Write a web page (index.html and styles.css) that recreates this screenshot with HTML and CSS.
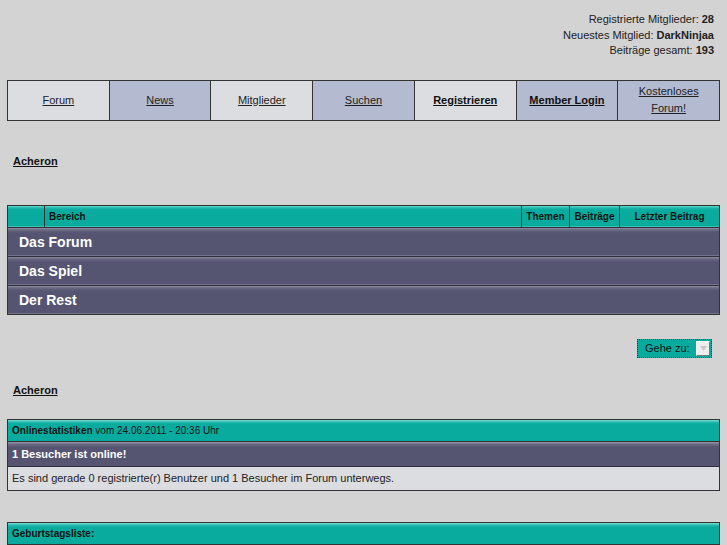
FILE: index.html
```html
<!DOCTYPE html>
<html lang="de">
<head>
  <meta charset="UTF-8" />
  <title>Acheron</title>
  <link rel="stylesheet" href="styles.css">
</head>
<body>
  <div class="page">
    <div class="board-stats">
      <div>Registrierte Mitglieder: <b>28</b></div>
      <div>Neuestes Mitglied: <b>DarkNinjaa</b></div>
      <div>Beiträge gesamt: <b>193</b></div>
    </div>

    <nav class="menu">
      <a class="menu-item light" href="#">Forum</a>
      <a class="menu-item blue" href="#">News</a>
      <a class="menu-item light" href="#">Mitglieder</a>
      <a class="menu-item blue" href="#">Suchen</a>
      <a class="menu-item light strong" href="#">Registrieren</a>
      <a class="menu-item blue strong" href="#">Member Login</a>
      <a class="menu-item blue" href="#">Kostenloses<br>Forum!</a>
    </nav>

    <div class="crumb crumb-top"><a href="#">Acheron</a></div>

    <table class="forums">
      <tr class="head">
        <th class="icon-col"></th>
        <th class="left">Bereich</th>
        <th class="topics">Themen</th>
        <th class="posts">Beiträge</th>
        <th class="last">Letzter Beitrag</th>
      </tr>
      <tr class="cat"><td colspan="5">Das Forum</td></tr>
      <tr class="cat"><td colspan="5">Das Spiel</td></tr>
      <tr class="cat"><td colspan="5">Der Rest</td></tr>
    </table>

    <div class="jump">
      <div class="jump-select">
        <span>Gehe zu:</span>
        <span class="jump-btn"><svg width="7" height="5" viewBox="0 0 7 5"><path d="M0 0h7L3.5 5z" fill="#c8c8c8"/></svg></span>
      </div>
    </div>

    <div class="crumb crumb-bottom"><a href="#">Acheron</a></div>

    <div class="box">
      <div class="box-head"><b>Onlinestatistiken</b> vom 24.06.2011 - 20:36 Uhr</div>
      <div class="box-cat">1 Besucher ist online!</div>
      <div class="box-body">Es sind gerade 0 registrierte(r) Benutzer und 1 Besucher im Forum unterwegs.</div>
    </div>

    <div class="box box-birthday">
      <div class="box-head"><b>Geburtstagsliste:</b></div>
    </div>
  </div>
</body>
</html>
```

FILE: styles.css
```css
* {
  box-sizing: border-box;
}

body {
  margin: 0;
  background: #d3d3d3;
  color: #111;
  font-family: "Liberation Sans", Arial, sans-serif;
  font-size: 11px;
}

.page {
  padding: 0 7px;
  width: 727px;
}

.board-stats {
  text-align: right;
  padding: 12px 6px 0 0;
  line-height: 15.5px;
  color: #222;
}

.menu {
  display: flex;
  margin-top: 21px;
  border: 1px solid #333;
  height: 41px;
}

.menu-item {
  flex: 1;
  display: flex;
  align-items: center;
  justify-content: center;
  text-align: center;
  color: #222;
  line-height: 17px;
  border-left: 1px solid #333;
}

.menu-item:first-child {
  border-left: none;
}

.menu-item.light {
  background: #dcdde1;
}

.menu-item.blue {
  background: #b4bbd0;
}

.menu-item.strong {
  font-weight: bold;
  color: #111;
}

.crumb a {
  color: #111;
  font-weight: bold;
}

.crumb {
  padding-left: 6px;
}

.crumb-top {
  margin-top: 34px;
}

.forums {
  width: 713px;
  margin-top: 38px;
  border-collapse: collapse;
  border: 1px solid #333;
}

.forums th {
  height: 22px;
  padding: 0;
  font-size: 10px;
  background: linear-gradient(#7fded6 0, #2bbcb1 2px, #0aab9f 4px);
  border-left: 1px solid #333;
  border-bottom: 1px solid #333;
  color: #111;
}

.forums th.left {
  text-align: left;
  padding-left: 4px;
}

.forums .icon-col {
  width: 37px;
  border-left: none;
}

.forums .topics {
  width: 48px;
}

.forums .posts {
  width: 50px;
}

.forums .last {
  width: 100px;
}

.forums .cat td {
  height: 29px;
  padding: 0 0 0 11px;
  color: #fff;
  font-size: 14px;
  font-weight: bold;
  background: linear-gradient(#9a99ae 0, #6e6d87 2px, #555571 5px);
  border-bottom: 1px solid #2e2e3c;
}

.forums .cat:last-child td {
  border-bottom: none;
}

.jump {
  display: flex;
  justify-content: flex-end;
  padding-right: 8px;
  margin-top: 24px;
}

.jump-select {
  display: flex;
  align-items: center;
  justify-content: space-between;
  width: 75px;
  height: 19px;
  padding: 0 1px 0 7px;
  background: #0aab9f;
  border: 1px dotted #0a4d47;
  color: #111;
}

.jump-btn {
  display: flex;
  align-items: center;
  justify-content: center;
  width: 14px;
  height: 15px;
  background: #eeeeee;
  border: 1px solid #fff;
  border-right-color: #777;
  border-bottom-color: #777;
}

.crumb-bottom {
  margin-top: 26px;
}

.box {
  width: 713px;
  border: 1px solid #333;
  margin-top: 23px;
}

.box-head {
  height: 22px;
  line-height: 22px;
  padding-left: 4px;
  font-size: 10px;
  background: linear-gradient(#7fded6 0, #2bbcb1 2px, #0aab9f 4px);
  border-bottom: 1px solid #333;
}

.box-cat {
  height: 25px;
  line-height: 24px;
  padding-left: 4px;
  color: #fff;
  font-weight: bold;
  background: linear-gradient(#9a99ae 0, #6e6d87 2px, #555571 5px);
  border-bottom: 1px solid #2e2e3c;
}

.box-body {
  height: 23px;
  line-height: 23px;
  padding-left: 4px;
  background: #dcdde1;
  color: #222;
}

.box-birthday {
  margin-top: 31px;
}
```
